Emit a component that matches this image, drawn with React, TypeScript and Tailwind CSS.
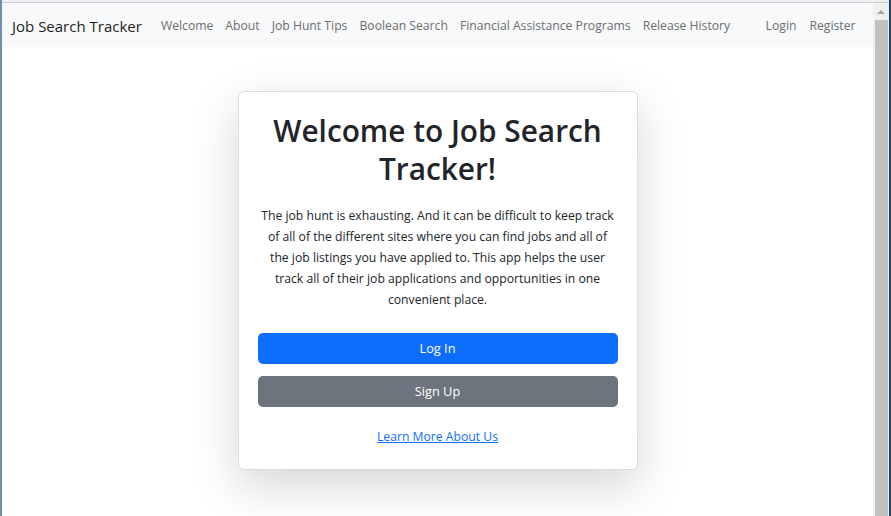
import React from "react";

const navLinks = [
  "Welcome",
  "About",
  "Job Hunt Tips",
  "Boolean Search",
  "Financial Assistance Programs",
  "Release History",
];

const font = { fontFamily: '"Open Sans", "Noto Sans", sans-serif' };

export default function App() {
  return (
    <div className="flex h-[516px] w-[891px] overflow-hidden bg-white" style={font}>
      {/* window edge left */}
      <div className="w-[2px] shrink-0 bg-[#6f8fb0]" />

      <div className="flex flex-1 flex-col">
        <div className="h-[2px] bg-[#eef0f2]" />
        <div className="h-px bg-[#c9ccd0]" />

        <div className="flex flex-1 min-h-0">
          <div className="flex flex-1 flex-col">
            {/* Navbar */}
            <nav className="flex h-[44px] items-center whitespace-nowrap bg-[#f8f9fa] pt-[3px] pl-[10px] pr-[11px]">
              <span className="mr-[13px] text-[15px] text-[#1d1f21]">Job Search Tracker</span>
              <ul className="flex items-center">
                {navLinks.map((l) => (
                  <li key={l} className="px-[6px] text-[12.2px] text-[#6c6e70]">
                    {l}
                  </li>
                ))}
              </ul>
              <ul className="ml-auto flex items-center">
                <li className="px-[6.5px] text-[12.2px] text-[#6c6e70]">Login</li>
                <li className="px-[6.5px] text-[12.2px] text-[#6c6e70]">Register</li>
              </ul>
            </nav>

            {/* Content */}
            <main className="flex flex-1 justify-center pt-[44px]">
              <div className="h-fit w-[400px] rounded-[6px] border border-[#dcdcdc] bg-white px-[19px] pt-[20px] pb-[22px] text-center shadow-[0_16px_48px_rgba(0,0,0,0.17)]">
                <h1 className="text-[29.8px] font-semibold leading-[38px] text-[#212529]">
                  Welcome to Job Search Tracker!
                </h1>
                <p className="mt-[17px] px-[2px] text-[12.2px] leading-[21px] text-[#212529]">
                  The job hunt is exhausting. And it can be difficult to keep track of all of the different
                  sites where you can find jobs and all of the job listings you have applied to. This app
                  helps the user track all of their job applications and opportunities in one convenient
                  place.
                </p>
                <div className="mt-[23px] flex flex-col gap-[12px]">
                  <button className="h-[31px] w-full rounded-[5px] bg-[#0d6efd] pt-px text-[12.8px] text-white">
                    Log In
                  </button>
                  <button className="h-[31px] w-full rounded-[5px] bg-[#6c757d] pt-px text-[12.8px] text-white">
                    Sign Up
                  </button>
                </div>
                <div className="mt-[18px] leading-[21px]">
                  <a href="#" className="text-[12.2px] text-[#0d6efd] underline">
                    Learn More About Us
                  </a>
                </div>
              </div>
            </main>
          </div>

          {/* scrollbar */}
          <div className="flex w-[16px] shrink-0 flex-col items-center bg-[#f0f0f0]">
            <div className="flex h-[17px] items-center justify-center">
              <div className="h-0 w-0 border-x-[4px] border-b-[4px] border-x-transparent border-b-[#a3a3a3]" />
            </div>
            <div className="w-[13px] flex-1 bg-[#c1c1c1]" />
          </div>
        </div>
      </div>

      {/* window edge right */}
      <div className="w-[2px] shrink-0 bg-[#27405a]" />
    </div>
  );
}
